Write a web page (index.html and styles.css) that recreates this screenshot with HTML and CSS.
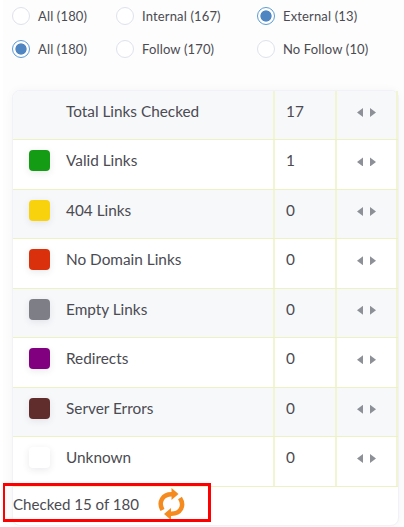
FILE: index.html
```html
<!DOCTYPE html>
<html lang="en">
<head>
    <meta charset="UTF-8">
    <meta name="viewport" content="width=device-width, initial-scale=1.0">
    <title>Link Checker</title>
    <link rel="stylesheet" href="styles.css">
</head>
<body>

    <div class="container">
        <div class="filters">
            <label><input type="radio" name="scope">All (180)</label>
            <label><input type="radio" name="scope">Internal (167)</label>
            <label><input type="radio" name="scope" checked>External (13)</label>
            <label><input type="radio" name="follow" checked>All (180)</label>
            <label><input type="radio" name="follow">Follow (170)</label>
            <label><input type="radio" name="follow">No Follow (10)</label>
        </div>

        <div class="card">
            <div class="row">
                <div class="name"><span class="no-swatch"></span>Total Links Checked</div>
                <div class="count">17</div>
                <div class="nav"><i class="prev"></i><i class="next"></i></div>
            </div>
            <div class="row">
                <div class="name"><span class="swatch valid"></span>Valid Links</div>
                <div class="count">1</div>
                <div class="nav"><i class="prev"></i><i class="next"></i></div>
            </div>
            <div class="row">
                <div class="name"><span class="swatch not-found"></span>404 Links</div>
                <div class="count">0</div>
                <div class="nav"><i class="prev"></i><i class="next"></i></div>
            </div>
            <div class="row">
                <div class="name"><span class="swatch no-domain"></span>No Domain Links</div>
                <div class="count">0</div>
                <div class="nav"><i class="prev"></i><i class="next"></i></div>
            </div>
            <div class="row">
                <div class="name"><span class="swatch empty"></span>Empty Links</div>
                <div class="count">0</div>
                <div class="nav"><i class="prev"></i><i class="next"></i></div>
            </div>
            <div class="row">
                <div class="name"><span class="swatch redirect"></span>Redirects</div>
                <div class="count">0</div>
                <div class="nav"><i class="prev"></i><i class="next"></i></div>
            </div>
            <div class="row">
                <div class="name"><span class="swatch server"></span>Server Errors</div>
                <div class="count">0</div>
                <div class="nav"><i class="prev"></i><i class="next"></i></div>
            </div>
            <div class="row">
                <div class="name"><span class="swatch unknown"></span>Unknown</div>
                <div class="count">0</div>
                <div class="nav"><i class="prev"></i><i class="next"></i></div>
            </div>

            <div class="status">
                <span>Checked 15 of 180</span>
                <svg class="refresh" viewBox="0 0 27 32" width="27" height="32">
                    <path d="M4.500 22 C0 14 4.500 6 14 6.200" />
                    <path d="M22 10 C27 18 22.500 26 13 25.800" />
                    <polygon points="13.500,0 20.500,6 13.500,12" />
                    <polygon points="13,20 6,26 13,32" />
                </svg>
                <div class="highlight"></div>
            </div>
        </div>
    </div>

</body>
</html>
```
FILE: styles.css
```css
* {
    box-sizing: border-box;
}

body {
    margin: 0;
    background: #fff;
    font-family: Lato, sans-serif;
    color: #4b4b52;
}

.container {
    height: 527px;
    margin-left: 3px;
    padding: 0 6px 0 9px;
    background: #fdfdfd;
    overflow: hidden;
}

/* Radio filters */
.filters {
    display: grid;
    grid-template-columns: 104px 141px 1fr;
    grid-template-rows: 33px 33px;
    height: 90px;
    padding-top: 15px;
    margin-top: -16px;
    margin-bottom: 16px;
    font-size: 13px;
    letter-spacing: 0.15px;
}

.filters label {
    display: flex;
    align-items: center;
    line-height: 16px;
    white-space: nowrap;
}

.filters input {
    appearance: none;
    width: 18px;
    height: 18px;
    margin: 0 8px 0 0;
    border: 1px solid #dfe2ec;
    border-radius: 50%;
    background: #fff;
}

.filters input:checked {
    border-color: #5b9bd5;
    background: radial-gradient(circle, #4f86c1 5.2px, #fff 6px);
}

/* Results */
.card {
    width: 387px;
    height: 436px;
    border: 1px solid #f1f1f7;
    border-radius: 8px;
    background: #fff;
    box-shadow: 0 0 8px rgba(60, 60, 90, 0.04);
}

.row {
    display: grid;
    grid-template-columns: 262px 62px 61px;
    height: 49.45px;
    border-bottom: 1px solid #edf2c4;
}

.row:nth-child(odd) {
    background: #f7f8fa;
}

.row:first-child {
    border-radius: 7px 7px 0 0;
}

.row > div {
    border-right: 2px solid #f1f5d3;
}

.name {
    display: flex;
    align-items: flex-start;
    padding-top: 10px;
    padding-left: 16px;
    font-size: 15.35px;
    line-height: 20px;
}

.swatch,
.no-swatch {
    width: 21px;
    height: 21px;
    margin-right: 16px;
}

.swatch {
    border-radius: 4px;
    box-shadow: 0 2px 7px rgba(50, 50, 80, 0.1);
}

.valid { background: #159c15; }
.not-found { background: #f8d20c; }
.no-domain { background: #da310c; }
.empty { background: #7e7f86; }
.redirect { background: #800080; }
.server { background: #602c2c; }
.unknown { background: #fff; }

.count {
    padding-top: 10px;
    padding-left: 11px;
    font-size: 15.35px;
    line-height: 20px;
}

.nav {
    display: flex;
    justify-content: center;
    gap: 7px;
    padding-top: 17px;
}

.prev,
.next {
    width: 6px;
    height: 9px;
    background: #8d9097;
}

.prev { clip-path: polygon(100% 0, 100% 100%, 0 50%); }
.next { clip-path: polygon(0 0, 100% 50%, 0 100%); }

/* Progress line */
.status {
    position: relative;
    display: flex;
    align-items: center;
    gap: 19px;
    height: 34px;
    font-size: 15.1px;
}

.refresh {
    fill: #f58b1f;
}

.refresh path {
    fill: none;
    stroke: #f58b1f;
    stroke-width: 4.5;
}

.highlight {
    position: absolute;
    left: -11px;
    top: -4px;
    width: 209px;
    height: 39px;
    border: 3px solid #fe0000;
}
```
